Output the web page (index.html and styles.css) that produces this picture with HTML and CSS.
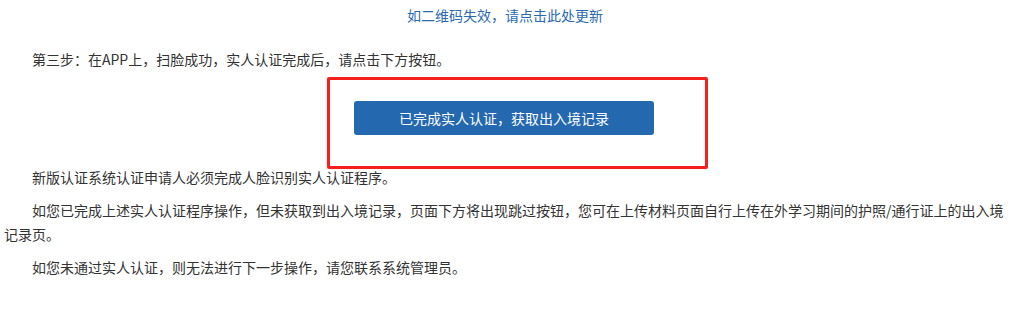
FILE: index.html
```html
<!DOCTYPE html>
<html lang="zh-CN">
<head>
<meta charset="utf-8">
<title>实人认证</title>
<link rel="stylesheet" href="styles.css">
</head>
<body>
<div class="page">
  <div class="refresh"><a class="refresh-link" href="#">如二维码失效，请点击此处更新</a></div>
  <p class="para step">第三步：在APP上，扫脸成功，实人认证完成后，请点击下方按钮。</p>
  <div class="btn-area">
    <button class="btn-primary" type="button">已完成实人认证，获取出入境记录</button>
    <div class="mark"></div>
  </div>
  <p class="para">新版认证系统认证申请人必须完成人脸识别实人认证程序。</p>
  <p class="para">如您已完成上述实人认证程序操作，但未获取到出入境记录，页面下方将出现跳过按钮，您可在上传材料页面自行上传在外学习期间的护照/通行证上的出入境记录页。</p>
  <p class="para">如您未通过实人认证，则无法进行下一步操作，请您联系系统管理员。</p>
</div>
</body>
</html>
```

FILE: styles.css
```css
html, body {
  margin: 0;
  padding: 0;
  background: #ffffff;
}

body {
  font-family: "Noto Sans CJK SC", "Noto Sans", "Liberation Sans", sans-serif;
  font-size: 14px;
  color: #333333;
}

.page {
  width: 1002px;
  margin-left: 4px;
  padding-top: 3px;
}

.refresh {
  text-align: center;
  line-height: 24px;
}

.refresh-link {
  color: #2a6ab2;
  text-decoration: none;
}

.para {
  margin: 9px 0 0;
  line-height: 24px;
  text-indent: 28px;
}

.step {
  margin-top: 20px;
}

.btn-area {
  position: relative;
  display: flex;
  justify-content: center;
  padding: 30px 2px 21px 0;
}

.btn-primary {
  width: 300px;
  height: 34px;
  border: none;
  border-radius: 3px;
  background: #2468b0;
  color: #ffffff;
  font-family: inherit;
  font-size: 14px;
  padding: 0;
  cursor: pointer;
}

.mark {
  position: absolute;
  left: 323px;
  top: 6px;
  width: 381px;
  height: 92px;
  box-sizing: border-box;
  border: 3px solid #f5201b;
  border-radius: 2px;
  pointer-events: none;
}
```
